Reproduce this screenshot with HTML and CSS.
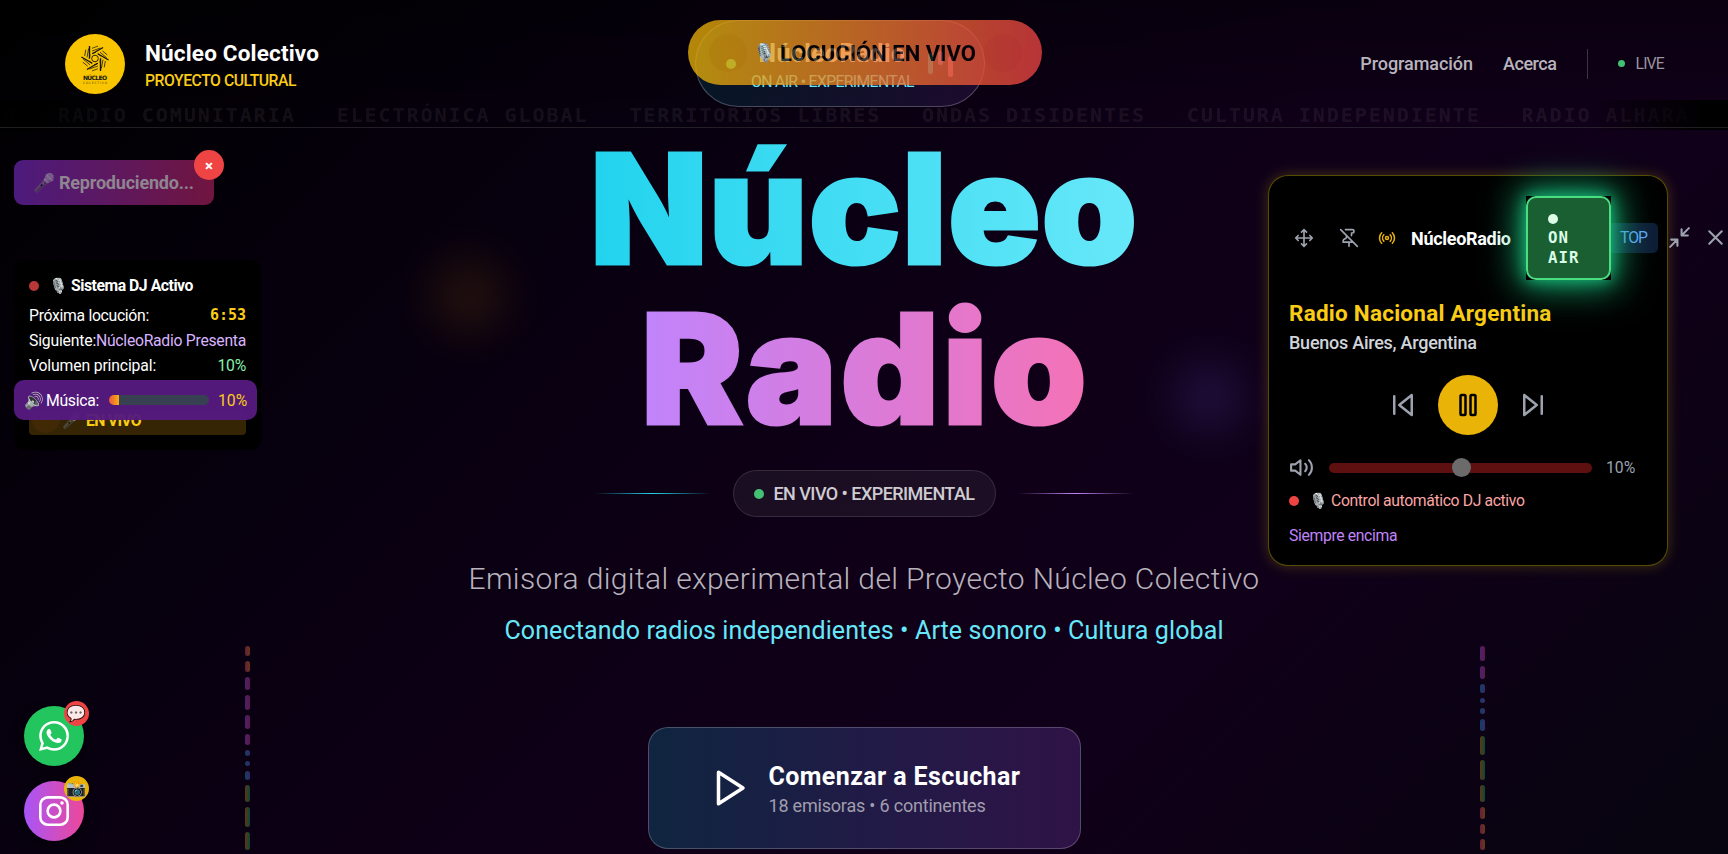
FILE: index.html
```html
<!DOCTYPE html>
<html lang="es">
<head>
<meta charset="utf-8">
<title>NúcleoRadio</title>
<link rel="stylesheet" href="styles.css">
</head>
<body>
<div class="blob blob-orange"></div>
<div class="blob blob-purple"></div>

<div class="ticker">
  <span class="ticker-lead">O</span>
  <span>RADIO COMUNITARIA</span><span>ELECTRÓNICA GLOBAL</span><span>TERRITORIOS LIBRES</span><span>ONDAS DISIDENTES</span><span>CULTURA INDEPENDIENTE</span><span>RADIO ALHARA</span>
</div>

<header class="header">
  <div class="brand">
    <svg class="logo" viewBox="0 0 60 60">
      <circle cx="30" cy="30" r="30" fill="#f9c400"/>
      <g stroke="#151515" fill="none">
        <circle cx="30" cy="24.5" r="3.3" stroke-width=".9"/>
        <g id="blade" stroke-width="1.4"><path d="M24.5 12v12.5"/><path d="M27 14.3l6-2.2M27 17l8.5-3M27 19.6l4-1.4" stroke-width=".7"/></g>
        <use href="#blade" transform="rotate(60 30 24.5)"/><use href="#blade" transform="rotate(120 30 24.5)"/><use href="#blade" transform="rotate(180 30 24.5)"/><use href="#blade" transform="rotate(240 30 24.5)"/><use href="#blade" transform="rotate(300 30 24.5)"/>
      </g>
      <text class="logo-name" x="30" y="45.8" text-anchor="middle" textLength="24">NÚCLEO</text>
      <text class="logo-sub" x="30" y="50" text-anchor="middle" textLength="24">COLECTIVO</text>
    </svg>
    <div class="brand-text">
      <div class="brand-name">Núcleo Colectivo</div>
      <div class="brand-sub">PROYECTO CULTURAL</div>
    </div>
  </div>
  <nav class="nav">
    <a class="nav-prog">Programación</a>
    <a class="nav-acerca">Acerca</a>
    <i class="nav-rule"></i>
    <span class="live"><i></i><span>LIVE</span></span>
  </nav>
</header>

<div class="station">
  <i class="station-dot"></i>
  <div class="station-text">
    <div class="station-name">NúcleoRadio</div>
    <div class="station-sub">ON AIR • EXPERIMENTAL</div>
  </div>
  <div class="station-bars"><i></i><i></i><i></i></div>
</div>
<div class="toast"><i class="toast-spot"></i><span class="emoji gray">🎙️</span><span class="toast-label">LOCUCIÓN EN VIVO</span><i class="toast-spot right"></i></div>

<main class="hero">
  <h1 class="title"><span class="title-a">Núcleo</span><span class="title-b">Radio</span></h1>
  <div class="status">
    <i class="line cyan"></i>
    <div class="status-pill"><i></i><span>EN VIVO • EXPERIMENTAL</span></div>
    <i class="line violet"></i>
  </div>
  <p class="tagline">Emisora digital experimental del Proyecto Núcleo Colectivo</p>
  <p class="subline">Conectando radios independientes • Arte sonoro • Cultura global</p>
  <button class="cta">
    <svg class="ic" width="42" height="42" viewBox="0 0 24 24"><path d="M6 3l14 9-14 9z"/></svg>
    <span class="cta-text"><span class="cta-title">Comenzar a Escuchar</span><span class="cta-sub">18 emisoras • 6 continentes</span></span>
  </button>
</main>

<div class="eq eq-left">
  <i class="r" style="height:10px"></i><i class="r" style="height:11px"></i><i class="p" style="height:13px"></i><i class="p" style="height:15px"></i><i class="p" style="height:14px"></i><i class="p" style="height:11px"></i><i class="b" style="height:6px"></i><i class="b" style="height:5px"></i><i class="b" style="height:9px"></i><i class="g" style="height:17px"></i><i class="g" style="height:20px"></i><i class="g" style="height:18px"></i>
</div>
<div class="eq eq-right">
  <i class="p" style="height:15px"></i><i class="p" style="height:13px"></i><i class="b" style="height:9px"></i><i class="b" style="height:5px"></i><i class="b" style="height:6px"></i><i class="b" style="height:12px"></i><i class="g" style="height:19px"></i><i class="g" style="height:20px"></i><i class="g" style="height:17px"></i><i class="r" style="height:12px"></i><i class="r" style="height:10px"></i><i class="r" style="height:11px"></i>
</div>

<div class="playing"><span class="emoji">🎤</span><span class="playing-label">Reproduciendo...</span></div>
<div class="playing-close">×</div>

<section class="dj">
  <div class="dj-head"><i></i><span class="emoji gray">🎙️</span><span class="dj-title">Sistema DJ Activo</span></div>
  <div class="dj-row"><span class="dj-next-label">Próxima locución:</span><b class="clock">6:53</b></div>
  <div class="dj-row"><span class="dj-show-label">Siguiente:</span><span class="next">NúcleoRadio Presenta</span></div>
  <div class="dj-row"><span class="dj-vol-label">Volumen principal:</span><span class="pct">10%</span></div>
  <div class="dj-live"><i></i><span class="emoji">🎤</span><span>EN VIVO</span></div>
</section>
<div class="music"><span class="emoji gray">🔊</span><span class="music-label">Música:</span><span class="music-bar"><i></i></span><span class="music-pct">10%</span></div>

<aside class="player">
  <div class="player-head">
    <svg class="ic i-move" width="20" height="20" viewBox="0 0 24 24"><path d="M12 2v20M2 12h20M5 9l-3 3 3 3M9 5l3-3 3 3M15 19l-3 3-3-3M19 9l3 3-3 3"/></svg>
    <svg class="ic i-pin" width="20" height="20" viewBox="0 0 24 24"><path d="M2 2l20 20M12 17v5M9 9v1.76a2 2 0 0 1-1.11 1.79l-1.78.9A2 2 0 0 0 5 15.24V17h12M15 9.34V6h1a2 2 0 0 0 0-4H7.89"/></svg>
    <svg class="ic i-radio" width="18" height="18" viewBox="0 0 24 24"><path d="M4.9 19.1C1 15.2 1 8.8 4.9 4.9M7.8 16.2c-2.3-2.3-2.3-6.1 0-8.5M16.2 7.8c2.3 2.3 2.3 6.1 0 8.5M19.1 4.9C23 8.8 23 15.1 19.1 19"/><circle cx="12" cy="12" r="2"/></svg>
    <span class="player-name">NúcleoRadio</span>
    <div class="onair-wrap"><div class="onair"><i></i><span>ON<br>AIR</span></div></div>
    <span class="top"><span>TOP</span></span>
    <svg class="ic i-min" width="25" height="25" viewBox="0 0 24 24"><path d="M4 14h6v6M20 10h-6V4M14 10l7-7M3 21l7-7"/></svg>
    <svg class="ic i-x" width="25" height="25" viewBox="0 0 24 24"><path d="M18 6L6 18M6 6l12 12"/></svg>
  </div>
  <div class="player-title">Radio Nacional Argentina</div>
  <div class="player-city">Buenos Aires, Argentina</div>
  <div class="controls">
    <svg class="ic" width="30" height="30" viewBox="0 0 24 24"><path d="M19 20L9 12l10-8zM5 19V5"/></svg>
    <div class="pause"><svg class="ic" width="30" height="30" viewBox="0 0 24 24"><rect x="6" y="4" width="4" height="16" rx="1"/><rect x="14" y="4" width="4" height="16" rx="1"/></svg></div>
    <svg class="ic" width="30" height="30" viewBox="0 0 24 24"><path d="M5 4l10 8-10 8zM19 5v14"/></svg>
  </div>
  <div class="volume">
    <svg class="ic" width="25" height="25" viewBox="0 0 24 24"><path d="M11 5L6 9H2v6h4l5 4zM15.54 8.46a5 5 0 0 1 0 7.07M19.07 4.93a10 10 0 0 1 0 14.14"/></svg>
    <div class="track"><i></i></div>
    <span>10%</span>
  </div>
  <div class="auto"><i></i><span class="emoji gray">🎙️</span><span class="auto-label">Control automático DJ activo</span></div>
  <div class="always">Siempre encima</div>
</aside>

<div class="social">
  <div class="social-btn whatsapp">
    <svg width="30" height="30" viewBox="0 0 24 24" fill="#fff"><path d="M17.472 14.382c-.297-.149-1.758-.867-2.03-.967-.273-.099-.471-.148-.67.15-.197.297-.767.966-.94 1.164-.173.199-.347.223-.644.075-.297-.15-1.255-.463-2.39-1.475-.883-.788-1.48-1.761-1.653-2.059-.173-.297-.018-.458.13-.606.134-.133.298-.347.446-.52.149-.174.198-.298.298-.497.099-.198.05-.371-.025-.52-.075-.149-.669-1.612-.916-2.207-.242-.579-.487-.5-.669-.51-.173-.008-.371-.01-.57-.01-.198 0-.52.074-.792.372-.272.297-1.04 1.016-1.04 2.479 0 1.462 1.065 2.875 1.213 3.074.149.198 2.096 3.2 5.077 4.487.709.306 1.262.489 1.694.625.712.227 1.36.195 1.871.118.571-.085 1.758-.719 2.006-1.413.248-.694.248-1.289.173-1.413-.074-.124-.272-.198-.57-.347m-5.421 7.403h-.004a9.87 9.87 0 01-5.031-1.378l-.361-.214-3.741.982.998-3.648-.235-.374a9.86 9.86 0 01-1.51-5.26c.001-5.45 4.436-9.884 9.888-9.884 2.64 0 5.122 1.03 6.988 2.898a9.825 9.825 0 012.893 6.994c-.003 5.45-4.437 9.884-9.885 9.884m8.413-18.297A11.815 11.815 0 0012.05 0C5.495 0 .16 5.335.157 11.892c0 2.096.547 4.142 1.588 5.945L.057 24l6.305-1.654a11.882 11.882 0 005.683 1.448h.005c6.554 0 11.89-5.335 11.893-11.893a11.821 11.821 0 00-3.48-8.413z"/></svg>
    <span class="badge"><span class="pale">💬</span></span>
  </div>
  <div class="social-btn instagram">
    <svg width="30" height="30" viewBox="0 0 24 24" fill="none" stroke="#fff" stroke-width="2.1"><rect x="1.05" y="1.05" width="21.9" height="21.9" rx="6"/><circle cx="12" cy="12" r="5.1"/><circle cx="18.4" cy="5.6" r="1.45" fill="#fff" stroke="none"/></svg>
    <span class="badge">📸</span>
  </div>
</div>
</body>
</html>
```
FILE: styles.css
```css
*{box-sizing:border-box}
body{margin:0;height:854px;overflow:hidden;position:relative;color:#fff;font-family:Roboto,"Liberation Sans",sans-serif;background:linear-gradient(135deg,#000 0%,#06000d 25%,#0f0018 55%,#100019 72%,#07050f 100%)}
i{display:block;flex:none}
p,h1{margin:0}
span{white-space:nowrap}
svg{flex:none;display:block}
.ic{fill:none;stroke:currentColor;stroke-width:2;stroke-linecap:round;stroke-linejoin:round}
.emoji{font-family:"Noto Color Emoji",sans-serif;flex:none;letter-spacing:0}
.gray{filter:grayscale(.85)}

.blob{position:absolute;border-radius:50%;filter:blur(22px)}
.blob-orange{left:430px;top:258px;width:76px;height:76px;background:#b8700c;opacity:.15}
.blob-purple{left:1174px;top:362px;width:70px;height:70px;background:#5b4fc8;opacity:.2}

.ticker{position:absolute;left:0;top:100px;width:1728px;height:30px;overflow:hidden;display:flex;gap:40.9px;padding-left:3px;font:bold 20px/30px "DejaVu Sans Mono",monospace;letter-spacing:1.95px;color:rgba(255,255,255,.085);white-space:nowrap}
.ticker span{flex:none}
.ticker-lead{width:14px}
.ticker::before,.ticker::after{content:"";position:absolute;top:0;width:140px;height:30px}
.ticker::before{left:0;background:linear-gradient(90deg,#000,transparent)}
.ticker::after{right:0;background:linear-gradient(270deg,#000 15%,transparent)}

.header{position:absolute;left:0;top:0;width:1728px;height:128px;padding:0 64px 0 65px;border-bottom:1px solid rgba(255,255,255,.12);display:flex;align-items:center;justify-content:space-between;background:linear-gradient(180deg,rgba(0,0,0,.35),rgba(0,0,0,0))}
.brand{display:flex;gap:20px;align-items:center}
.brand-text{padding-top:4px}
.logo{width:60px;height:60px}
.logo-name{font:bold 6px "DejaVu Sans",sans-serif;fill:#151515}
.logo-sub{font:3px "DejaVu Sans",sans-serif;fill:#5c4a05}
.brand-name{font-size:22.5px;line-height:30px;font-weight:700;letter-spacing:.17px}
.brand-sub{font-size:15.75px;line-height:25px;font-weight:500;color:#facc15;letter-spacing:-.48px}
.nav{display:flex;align-items:center;font-size:18px;line-height:30px;font-weight:500;color:#b9b4bc}
.nav-prog{letter-spacing:-.05px}
.nav-acerca{margin-left:30px;letter-spacing:-.47px}
.nav-rule{width:1px;height:30px;margin:0 30px 0 31px;background:rgba(255,255,255,.2)}
.live{display:flex;align-items:center;gap:10px;font-size:15.75px;font-weight:400;color:#99949f;letter-spacing:-.8px}
.live i{width:7px;height:7px;border-radius:50%;background:#43c072}

.station{position:absolute;left:695px;top:20px;width:290px;height:87px;border-radius:44px;border:1px solid rgba(255,255,255,.24);background:linear-gradient(90deg,rgba(6,182,212,.12),rgba(168,85,247,.12));display:flex;align-items:center;padding:0 30px}
.station-dot{width:10px;height:10px;border-radius:50%;background:#4ade80}
.station-text{margin-left:15px;width:162px;padding-top:3px}
.station-name{font-size:25px;line-height:34px;font-weight:800;letter-spacing:.3px;text-align:center;background:linear-gradient(90deg,#a5f3fc,#fff,#fce7f3);background-clip:text;color:transparent}
.station-sub{font-size:15.75px;line-height:22px;letter-spacing:-.64px;color:#67e8f9;white-space:nowrap}
.station-bars{display:flex;gap:5px;align-items:center;margin-left:15px;opacity:.65}
.station-bars i{width:5px;border-radius:3px;height:21px;background:#22d3ee}
.station-bars i:nth-child(2){height:14px;margin-top:-12px;background:#c084fc}
.station-bars i:nth-child(3){height:21px;margin-top:6px;background:#f472b6}
.toast{position:absolute;left:688px;top:20px;width:354px;height:65px;border-radius:33px;opacity:.76;background:linear-gradient(90deg,#eab308,#ef4444);display:flex;align-items:center;color:#000;padding-left:21px}
.toast-spot{width:38px;height:38px;border-radius:50%;background:rgba(220,140,0,.25)}
.toast .emoji{font-size:18px;line-height:24px;margin-left:5px;width:26px;text-align:center}
.toast-label{font-size:22px;font-weight:700;margin-left:2px;margin-top:2px;width:200px;letter-spacing:0}
.toast-spot.right{background:rgba(220,50,55,.14);margin-left:4px}

.hero{padding-top:129px;display:flex;flex-direction:column;align-items:center}
.title{display:flex;flex-direction:column;align-items:center;font:900 153px/160px Inter,sans-serif}
.title span{background-clip:text;-webkit-background-clip:text;color:transparent;-webkit-text-stroke:3px transparent}
.title-a{background-image:linear-gradient(90deg,#22d3ee,#67e8f9);letter-spacing:.8px}
.title-b{background-image:linear-gradient(90deg,#c084fc,#f472b6);letter-spacing:3.3px;padding-left:3px}
.status{display:flex;align-items:center;margin-top:21px;gap:21.5px}
.line{width:117px;height:1px}
.cyan{background:linear-gradient(90deg,transparent,#22d3ee,transparent)}
.violet{background:linear-gradient(90deg,transparent,#c084fc,transparent)}
.status-pill{width:263px;height:47px;border-radius:24px;border:1px solid rgba(255,255,255,.12);background:rgba(255,255,255,.055);display:flex;align-items:center;gap:10px;padding-left:20px;font-size:18px;font-weight:500;letter-spacing:-.55px;color:#cfccd1}
.status-pill i{width:10px;height:10px;border-radius:50%;background:#43c072}
.tagline{margin-top:44px;font-size:30px;line-height:36px;font-weight:300;letter-spacing:.36px;color:#b8b3bc;white-space:nowrap}
.subline{margin-top:18.5px;font-size:25px;line-height:30px;letter-spacing:.11px;color:#67e8f9;white-space:nowrap}
.cta{margin-top:81px;width:433px;height:122px;border-radius:20px;border:1px solid rgba(255,255,255,.22);background:linear-gradient(90deg,#0f2540,#221a47 55%,#2f1347);color:#fff;font-family:inherit;display:flex;align-items:center;gap:19px;padding:0 0 0 59px;text-align:left}
.cta-text{padding-top:4px}
.cta-title,.cta-sub{display:block}
.cta-title{font-size:25px;line-height:33px;font-weight:700;letter-spacing:.4px}
.cta-sub{font-size:18px;line-height:26px;letter-spacing:-.2px;color:#a19dad}

.eq{position:absolute;top:646px;display:flex;flex-direction:column;gap:5px;opacity:.4}
.eq-left{left:245px}
.eq-right{left:1480px}
.eq i{width:5px;border-radius:3px}
.r{background:linear-gradient(90deg,#ec4877,#f08a24)}
.p{background:linear-gradient(90deg,#a855f7,#d93c96)}
.b{background:linear-gradient(90deg,#0fa5cf,#8b5cf6)}
.g{background:linear-gradient(90deg,#d98a10,#12b070)}

.playing{position:absolute;left:14px;top:160px;width:200px;height:45px;border-radius:9px;background:linear-gradient(90deg,#4c1b7d,#70153f);display:flex;align-items:center;padding-left:19px}
.playing .emoji{font-size:18px;width:26px;opacity:.5;filter:grayscale(.9)}
.playing-label{font-size:18px;font-weight:700;color:#8f8591;letter-spacing:-.2px}
.playing-close{position:absolute;left:194px;top:150px;width:30px;height:30px;border-radius:50%;background:#ef4444;display:flex;align-items:center;justify-content:center;font-size:15px;font-weight:700;padding-top:2px}

.dj{position:absolute;left:14px;top:260px;width:247px;height:190px;border-radius:10px;background:rgba(0,0,0,.9);padding:13px 15px 0;font-size:15.75px}
.dj-head{display:flex;align-items:center;height:25px;margin-bottom:5px}
.dj-head i{width:10px;height:10px;border-radius:50%;background:#b83737;margin-right:10px}
.dj-head .emoji{width:22px;font-size:15px}
.dj-title{font-weight:700;letter-spacing:-.46px}
.dj-row{display:flex;justify-content:space-between;height:25px;line-height:25px}
.dj-next-label{letter-spacing:-.31px}
.dj-show-label{letter-spacing:-.19px}
.dj-vol-label{letter-spacing:-.15px}
.clock{font:bold 15px/25px "DejaVu Sans Mono",monospace;color:#facc15}
.next{color:#d8b4fe;letter-spacing:-.28px}
.pct{color:#86efac;letter-spacing:-.25px}
.dj-live{margin-top:32px;height:25px;border-radius:4px;background:#352504;color:#facc15;display:flex;align-items:center;padding:0 0 4px 3px;font-weight:700;letter-spacing:-.7px}
.dj-live i{width:28px;height:21px;border-radius:0 0 14px 14px;background:#422905;margin-top:4px}
.dj-live .emoji{margin-left:2px;width:24px;font-size:15px;opacity:.6;filter:grayscale(.9)}
.music{position:absolute;left:14px;top:380px;width:243px;height:40px;border-radius:10px;background:rgba(85,26,128,.96);display:flex;align-items:center;font-size:15.75px;padding-left:10px}
.music .emoji{font-size:16px;width:22px}
.music-label{width:63px;letter-spacing:-.29px}
.music-bar{width:100px;height:10px;border-radius:5px;background:#374151;overflow:hidden}
.music-bar i{width:10px;height:10px;background:linear-gradient(90deg,#f0563d,#f5b014)}
.music-pct{color:#facc15;margin-left:9px}

.player{position:absolute;left:1268px;top:175px;width:400px;height:391px;border-radius:20px;border:1px solid rgba(220,200,8,.38);background:#000;box-shadow:0 0 14px rgba(234,200,8,.24);padding:19px 20px 0}
.player-head{display:flex;align-items:center;height:85px;color:#9ca3af}
.i-move{margin-left:5px}
.i-pin{margin-left:25px}
.i-radio{margin-left:19px;color:#eab308}
.player-name{margin-left:15px;margin-top:2px;width:115px;flex:none;font-size:18px;font-weight:700;letter-spacing:-.3px;color:#fff}
.onair-wrap{flex:none;position:relative;z-index:1;background:#000;width:85px;height:84px;box-shadow:0 0 36px 6px rgba(26,200,130,.85),0 0 14px rgba(26,200,130,.8)}
.onair{width:85px;height:84px;border:2px solid #4ade80;border-radius:10px;background:#1a5f32;color:#dcfce7;padding:16px 0 0 20px;font:bold 15.75px/20px "DejaVu Sans Mono",monospace;letter-spacing:1px}
.onair i{width:10px;height:10px;border-radius:50%;background:#dcfce7;margin-bottom:4px}
.top{flex:none;width:47px;height:30px;border-radius:0 5px 5px 0;background:rgba(59,130,246,.22);color:#60a5fa;font-size:15.75px;line-height:30px;padding-left:9px;letter-spacing:-1px}
.i-min{margin-left:9px}
.i-x{margin-left:11px}
.player-title{margin-top:16px;font-size:22.5px;line-height:34px;font-weight:700;letter-spacing:.24px;color:#facc15}
.player-city{font-size:18px;line-height:26px;font-weight:500;letter-spacing:-.25px;color:#d1d5db}
.controls{margin-top:19px;display:flex;align-items:center;justify-content:center;gap:20px;color:#9ca3af}
.pause{width:60px;height:60px;border-radius:50%;background:#eab308;color:#000;display:flex;align-items:center;justify-content:center}
.volume{display:flex;align-items:center;height:25px;margin-top:20px;color:#9ca3af;font-size:15.75px}
.track{width:263px;height:10px;border-radius:5px;background:#5e1010;margin:0 14px 0 15px;position:relative}
.track i{position:absolute;left:122.5px;top:-4.5px;width:19px;height:19px;border-radius:50%;background:#6b6b6b}
.auto{display:flex;align-items:center;margin-top:9px;height:23px;font-size:15.75px;color:#fca5a5}
.auto i{width:10px;height:10px;border-radius:50%;background:#ef4444;margin-right:10px}
.auto .emoji{width:22px;font-size:15px}
.auto-label{letter-spacing:-.37px}
.always{margin-top:12px;font-size:15.75px;line-height:23px;color:#c084fc;letter-spacing:-.36px}

.social{position:absolute;left:24px;top:706px;display:flex;flex-direction:column;gap:15px}
.social-btn{position:relative;width:60px;height:60px;border-radius:50%;display:flex;align-items:center;justify-content:center;box-shadow:0 8px 16px rgba(0,0,0,.4)}
.whatsapp{background:#22c55e}
.instagram{background:linear-gradient(90deg,#a855f7,#ec4899)}
.badge{position:absolute;left:40px;top:-5px;width:25px;height:25px;border-radius:50%;background:#ef4444;display:flex;align-items:center;justify-content:center;font:16px/25px "Noto Color Emoji",sans-serif}
.pale{opacity:.88}
.instagram .badge{background:#eab308}
```
